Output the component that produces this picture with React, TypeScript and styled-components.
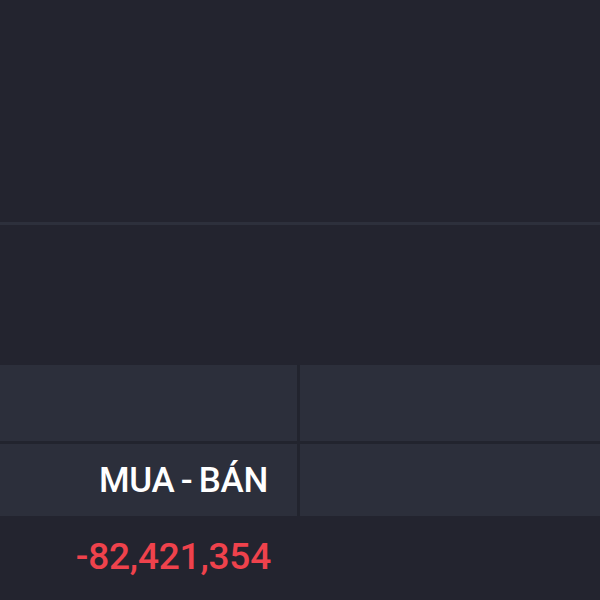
import React from 'react';
import styled, { createGlobalStyle } from 'styled-components';

const GlobalStyle = createGlobalStyle`
  html, body {
    margin: 0;
    padding: 0;
    background: #23242f;
    font-family: Roboto, "Liberation Sans", Arial, sans-serif;
  }
`;

const Page = styled.div`
  width: 600px;
  height: 600px;
  overflow: hidden;
  background: #23242f;
  display: flex;
  flex-direction: column;
`;

const Panel = styled.div<{ $h: number }>`
  height: ${(p) => p.$h}px;
  flex-shrink: 0;
`;

const Rule = styled.div`
  height: 3px;
  flex-shrink: 0;
  background: #2d303c;
`;

const Table = styled.div`
  display: grid;
  grid-template-columns: 297px 1fr;
  column-gap: 3px;
  row-gap: 3px;
  background: #22242e;
  flex-shrink: 0;
`;

const HeadCell = styled.div<{ $h: number }>`
  height: ${(p) => p.$h}px;
  background: #2c2f3b;
  display: flex;
  align-items: center;
  justify-content: flex-end;
  padding-right: 29px;
  color: #ffffff;
  font-size: 35px;
  font-weight: 500;
  letter-spacing: -0.3px;
  word-spacing: -2px;
`;

const BodyRow = styled.div`
  display: grid;
  grid-template-columns: 297px 1fr;
  column-gap: 3px;
  height: 80px;
  background: #23242f;
`;

const ValueCell = styled.div<{ $neg?: boolean }>`
  display: flex;
  align-items: center;
  justify-content: flex-end;
  padding-right: 26px;
  color: ${(p) => (p.$neg ? '#ef424c' : '#ffffff')};
  font-size: 37px;
  font-weight: 500;
  letter-spacing: -0.2px;
`;

export default function App() {
  return (
    <Page>
      <GlobalStyle />
      <Panel $h={222} />
      <Rule />
      <Panel $h={140} />
      <Table>
        <HeadCell $h={76} />
        <HeadCell $h={76} />
        <HeadCell $h={72}>MUA - BÁN</HeadCell>
        <HeadCell $h={72} />
      </Table>
      <BodyRow>
        <ValueCell $neg>-82,421,354</ValueCell>
        <ValueCell />
      </BodyRow>
    </Page>
  );
}
